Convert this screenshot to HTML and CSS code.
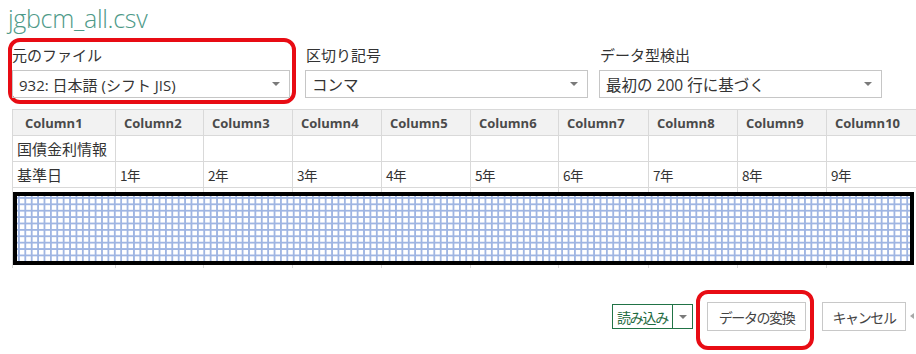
FILE: index.html
```html
<!DOCTYPE html>
<html lang="ja">
<head>
<meta charset="utf-8">
<title>jgbcm_all.csv</title>
<link rel="stylesheet" href="styles.css">
</head>
<body>
<div class="page">
  <h1 class="title">jgbcm_all.csv</h1>
  <div class="options">
    <div class="field field-enc highlight">
      <div class="label">元のファイル</div>
      <div class="select w1"><span>932: 日本語 (シフト JIS)</span><i class="caret"></i></div>
    </div>
    <div class="field field-delim">
      <div class="label">区切り記号</div>
      <div class="select w2"><span>コンマ</span><i class="caret"></i></div>
    </div>
    <div class="field field-type">
      <div class="label">データ型検出</div>
      <div class="select w2"><span>最初の 200 行に基づく</span><i class="caret"></i></div>
    </div>
  </div>
  <div class="preview">
    <table class="grid">
      <colgroup>
        <col class="c1"><col class="c2"><col class="c3"><col class="c4"><col class="c5">
        <col class="c6"><col class="c7"><col class="c8"><col class="c9"><col class="c10">
      </colgroup>
      <thead>
        <tr><th class="first">Column1</th><th>Column2</th><th>Column3</th><th>Column4</th><th>Column5</th><th>Column6</th><th>Column7</th><th>Column8</th><th>Column9</th><th>Column10</th></tr>
      </thead>
      <tbody>
        <tr><td>国債金利情報</td><td></td><td></td><td></td><td></td><td></td><td></td><td></td><td></td><td></td></tr>
        <tr><td>基準日</td><td>1年</td><td>2年</td><td>3年</td><td>4年</td><td>5年</td><td>6年</td><td>7年</td><td>8年</td><td>9年</td></tr>
        <tr class="rest"><td></td><td></td><td></td><td></td><td></td><td></td><td></td><td></td><td></td><td></td></tr>
      </tbody>
    </table>
    <div class="hatch"></div>
  </div>
  <div class="actions">
    <div class="split">
      <button class="btn-load">読み込み</button><button class="btn-drop"><i class="caret"></i></button>
    </div>
    <div class="highlight hl-btn">
      <button class="btn">データの変換</button>
    </div>
    <button class="btn btn-cancel">キャンセル</button>
    <span class="grip"></span>
  </div>
</div>
</body>
</html>
```
FILE: styles.css
```css
html, body {
  margin: 0;
  padding: 0;
  background: #ffffff;
}
body {
  font-family: "Open Sans", "Noto Sans CJK JP", sans-serif;
  color: #333333;
  width: 916px;
  height: 354px;
  overflow: hidden;
}
.page {
  padding: 0 0 0 8px;
}
.title {
  margin: 0;
  height: 38px;
  font-family: "Open Sans", "Noto Sans CJK JP", sans-serif;
  font-weight: 300;
  font-size: 25px;
  line-height: 36px;
  color: #4e9a88;
  letter-spacing: -0.3px;
}
.options {
  display: flex;
  align-items: flex-start;
}
.field {
  display: flex;
  flex-direction: column;
  gap: 4px;
  padding: 2px 0;
  border: 4px solid transparent;
}
.field-enc {
  padding-right: 2px;
}
.field-delim {
  margin-left: 5px;
}
.field-type {
  margin-left: 3px;
}
.highlight {
  border: 4px solid #e80c14;
  border-radius: 12px;
}
.label {
  height: 22px;
  line-height: 22px;
  font-size: 15px;
  color: #333333;
  font-family: "Noto Sans CJK JP", sans-serif;
}
.field-delim .label, .field-type .label {
  padding-left: 1px;
}
.select {
  box-sizing: border-box;
  height: 28px;
  border: 1px solid #c6c6c6;
  display: flex;
  align-items: center;
  justify-content: space-between;
  padding: 0 9px 0 6px;
  font-size: 15px;
  color: #333333;
}
.w1 { width: 278px; }
.w2 { width: 283px; }
.select span {
  font-family: "Open Sans", "Noto Sans CJK JP", sans-serif;
  white-space: nowrap;
}
.field-delim .select span, .field-type .select span {
  font-size: 15.5px;
}
.caret {
  display: inline-block;
  width: 0;
  height: 0;
  border-left: 4px solid transparent;
  border-right: 4px solid transparent;
  border-top: 4px solid #7a7a7a;
}
.preview {
  position: relative;
  margin: 5px 0 0 4px;
  width: 904px;
  overflow: hidden;
}
.grid {
  border-collapse: collapse;
  table-layout: fixed;
  width: 914px;
  font-size: 13px;
}
.c1 { width: 103px; }
.c2 { width: 88px; }
.c3 { width: 89px; }
.c4 { width: 89px; }
.c5 { width: 89px; }
.c6 { width: 88px; }
.c7 { width: 90px; }
.c8 { width: 89px; }
.c9 { width: 89px; }
.c10 { width: 100px; }
.grid th, .grid td {
  border: 1px solid #d9d9d9;
  text-align: left;
  padding: 0 0 0 8px;
  white-space: nowrap;
  overflow: hidden;
}
.grid th {
  height: 25px;
  background: #f2f2f2;
  font-family: "Open Sans", sans-serif;
  font-weight: 700;
  font-size: 13px;
  color: #4a4a4a;
}
.grid th.first {
  padding-left: 12px;
}
.grid td {
  height: 25px;
  font-family: "Noto Sans CJK JP", sans-serif;
  font-size: 15px;
  color: #333333;
  padding-left: 4px;
}
.grid tbody tr:nth-child(2) td {
  font-size: 13.5px;
  letter-spacing: -0.5px;
}
.grid tbody tr:nth-child(2) td:first-child {
  font-size: 15px;
  letter-spacing: 0;
}
.grid tr.rest td {
  height: 80px;
  border-bottom: none;
}
.hatch {
  position: absolute;
  left: 1px;
  top: 83px;
  width: 901px;
  height: 73px;
  box-sizing: border-box;
  border: 4px solid #000000;
  background-color: #ffffff;
  background-image:
    linear-gradient(90deg, #9fb5e2 2px, transparent 2px),
    linear-gradient(180deg, #9fb5e2 2px, transparent 2px);
  background-size: 6.4px 6.4px;
  background-position: 1px 1px;
}
.actions {
  display: flex;
  align-items: flex-start;
  margin: 22px 0 0 604px;
}
.split {
  display: flex;
  margin-top: 14px;
}
.split button {
  box-sizing: border-box;
  height: 25px;
  background: #ffffff;
  border: 1px solid #217346;
  margin: 0;
  font-family: "Noto Sans CJK JP", sans-serif;
  font-size: 14px;
  color: #1f6b3f;
}
.btn-load {
  width: 61px;
  padding: 0;
  letter-spacing: -1.2px;
}
.btn-drop {
  width: 20px;
  border-left: none !important;
  display: flex;
  align-items: center;
  justify-content: center;
  padding: 0;
}
.hl-btn {
  margin-left: 3px;
  padding: 8px 4px 15px 7px;
}
.btn {
  box-sizing: border-box;
  height: 29px;
  background: #ffffff;
  border: 1px solid #c8c8c8;
  font-family: "Noto Sans CJK JP", sans-serif;
  font-size: 14px;
  letter-spacing: -1.4px;
  color: #444444;
  padding: 0;
  margin: 0;
}
.hl-btn .btn {
  width: 99px;
}
.btn-cancel {
  width: 84px;
  margin: 12px 0 0 8px;
}
.grip {
  width: 0;
  height: 0;
  margin: 23px 0 0 4px;
  border-top: 3px solid transparent;
  border-bottom: 3px solid transparent;
  border-right: 4px solid #a8a8a8;
}
```
